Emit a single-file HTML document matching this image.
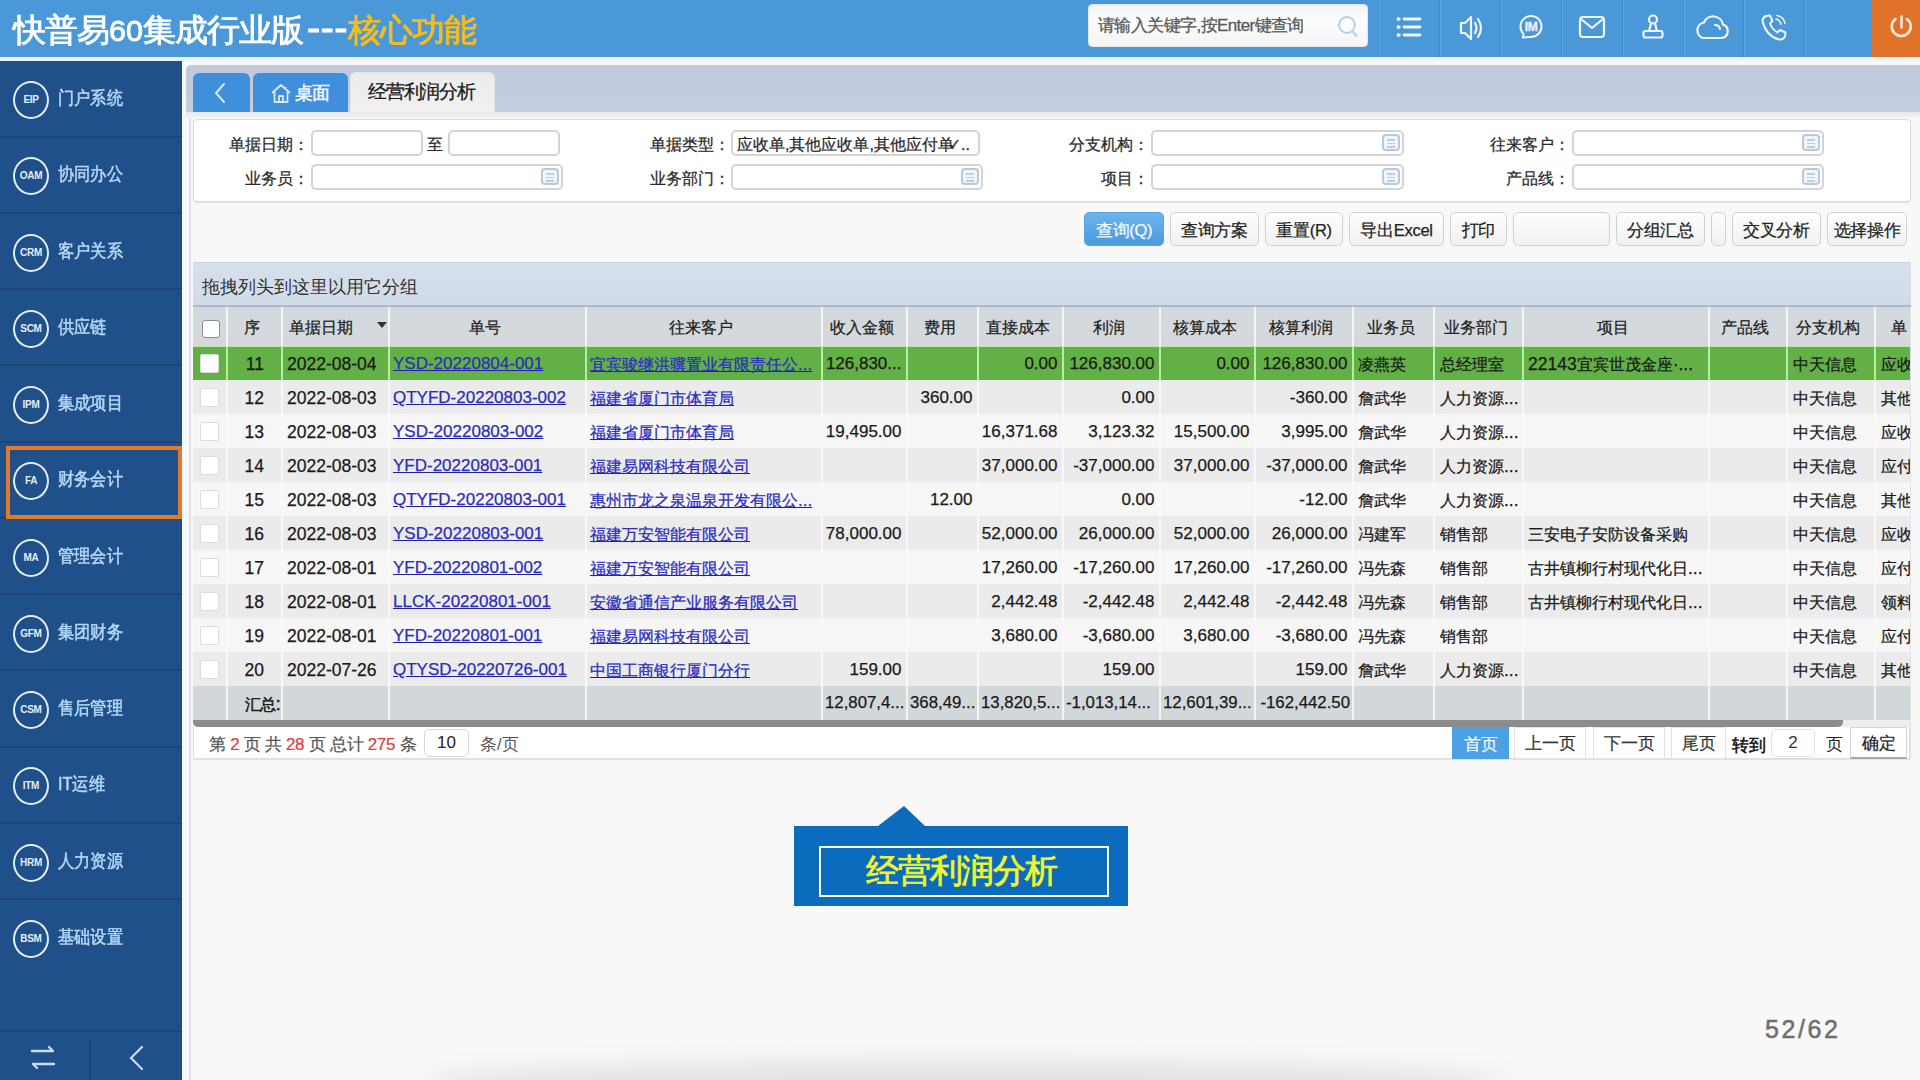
<!DOCTYPE html>
<html><head><meta charset="utf-8"><title>经营利润分析</title>
<style>
*{margin:0;padding:0;box-sizing:border-box}
html,body{width:1920px;height:1080px;overflow:hidden;background:#f8f8f8;font-family:"Liberation Sans",sans-serif;color:#222}
div,svg{position:absolute}
span{position:static}
.z{font-size:16.25px}
.nw{white-space:nowrap}
#hdr{left:0;top:0;width:1920px;height:57px;background:#4a98d8}
#hdrline{left:0;top:57px;width:1920px;height:4px;background:#eaf2fa}
#title{left:13px;top:11px;font-size:33px;line-height:40px;color:#fff;white-space:nowrap;letter-spacing:-1px;-webkit-text-stroke:0.9px currentColor;transform:scaleY(0.97);transform-origin:0 0}
#title span{position:static}
#search{left:1088px;top:4px;width:280px;height:43px;background:linear-gradient(#f2f2f2,#fdfdfd 40%,#f3f3f3);border-radius:4px;border:1px solid #dfe6ee}
#search .ph{left:9px;top:11px;font-size:17px;line-height:20px;color:#5a5a5a;white-space:nowrap;letter-spacing:-0.6px;-webkit-text-stroke:0.3px currentColor}
.ic{top:0;height:57px;width:2px;background:#5ea6e2;border-left:1px solid #4289c9}
#side{left:0;top:61px;width:183px;height:1019px;background:#1f5089}
.sep{left:0;width:183px;height:2px;background:#1b4677}
.cir{left:13px;width:36px;height:38px;border:2.5px solid #e4edf7;border-radius:50%;color:#e4edf7;font-size:10px;font-weight:bold;text-align:center;line-height:34px;letter-spacing:-0.3px}
.lab{left:58px;font-size:18px;line-height:22px;color:#b4d6f6;white-space:nowrap;transform:scaleX(0.9);transform-origin:0 0;-webkit-text-stroke:0.55px currentColor}
#sedge{left:182px;top:61px;width:5px;height:1019px;background:#f4f9fc}
#sedge2{left:189px;top:112px;width:1.5px;height:968px;background:#dfe3e8}
#main{left:186px;top:61px;width:1734px;height:1019px;background:#f8f8f8}
#tabbar{left:186px;top:65px;width:1734px;height:47px;background:linear-gradient(#c0cadb,#c4cee1);border-radius:5px 0 0 0}
.tab{top:73px;height:39px;border-radius:6px 6px 0 0;background:#3f8fdb}
#under{left:186px;top:112px;width:1734px;height:6px;background:linear-gradient(#e6e6e6,#f4f4f4)}
#filter{left:193px;top:119px;width:1718px;height:83px;background:#fff;border:1px solid #dadada;border-radius:4px;box-shadow:0 1px 1px #e2e2e2}
.fl{font-size:16.2px;line-height:20px;color:#2a2a2a;white-space:nowrap;text-align:right;margin-top:1px;-webkit-text-stroke:0.25px currentColor}
.inp{height:26px;border:2px solid #d4d4d4;border-radius:5px;background:#fff}
.lic{width:18px;height:17px;border:2px solid #b9c9dd;border-radius:4px;background:#eef7fd}
.lic i{position:absolute;left:3px;width:8px;height:1.6px;background:#bccce4}
.btn{top:212px;height:34px;border:1.5px solid #d0d0d0;border-radius:5px;background:linear-gradient(#fdfdfd,#f1f1f1);font-size:16.5px;line-height:34px;-webkit-text-stroke:0.25px currentColor;text-align:center;color:#222;white-space:nowrap;letter-spacing:-0.3px}
#grid{left:193px;top:263px;width:1718px;height:497px;background:#fff;border:1px solid #dde3ea}
#gbar{left:193px;top:262px;width:1718px;height:45px;background:linear-gradient(#d6e0ec,#d2dce9);border-top:1.5px solid #c9d1da;border-bottom:2px solid #a9b9ca;border-radius:3px 3px 0 0}
#gbar .t{left:9px;top:13px;font-size:18px;line-height:22px;color:#333;white-space:nowrap}
.row{left:193px;width:1717px;height:34px}
.cell{top:1px;height:100%;font-size:17.5px;line-height:34px;white-space:nowrap;overflow:hidden;color:#1a1a1a;-webkit-text-stroke:0.25px currentColor}
.vl{top:0;width:2px;height:100%}
.ck{width:18px;height:18px;border-radius:3px;background:#fff}
.lk{font-size:17px;color:#2c2cc0;text-decoration:underline;text-decoration-color:#2020a0}
</style></head><body>

<div id="hdr">
<div id="title">快普易<span style="font-size:30.5px;letter-spacing:0">60</span>集成行业版<span style="font-size:40px;letter-spacing:0.3px;margin-left:4px;line-height:0">---</span><span style="color:#f7bd1e">核心功能</span></div>
<div id="search"><div class="ph">请输入关键字,按Enter键查询</div><svg style="left:248px;top:10px" width="22" height="24" viewBox="0 0 22 24"><circle cx="10" cy="10" r="8" fill="none" stroke="#b4d2ea" stroke-width="2"/><line x1="15.5" y1="16" x2="19.5" y2="21" stroke="#b4d2ea" stroke-width="2.2" stroke-linecap="round"/></svg></div>
<div class="ic" style="left:1378px"></div>
<div class="ic" style="left:1439px"></div>
<div class="ic" style="left:1500px"></div>
<div class="ic" style="left:1561px"></div>
<div class="ic" style="left:1622px"></div>
<div class="ic" style="left:1683px"></div>
<div class="ic" style="left:1743px"></div>
<div class="ic" style="left:1804px"></div>
<svg style="left:1394px;top:14px" width="32" height="26" viewBox="0 0 32 26" fill="none" stroke="#eef5fc" stroke-width="2.2" stroke-linecap="round" stroke-linejoin="round"><circle cx="4.5" cy="5" r="1.5" fill="#eef5fc" stroke-width="1"/><circle cx="4.5" cy="13" r="1.5" fill="#eef5fc" stroke-width="1"/><circle cx="4.5" cy="21" r="1.5" fill="#eef5fc" stroke-width="1"/><line x1="10" y1="5" x2="26" y2="5" stroke-width="2.8"/><line x1="10" y1="13" x2="26" y2="13" stroke-width="2.8"/><line x1="10" y1="21" x2="26" y2="21" stroke-width="2.8"/></svg>
<svg style="left:1456px;top:13px" width="30" height="30" viewBox="0 0 30 30" fill="none" stroke="#eef5fc" stroke-width="2.2" stroke-linecap="round" stroke-linejoin="round"><path d="M5 10 H9 L15 4 V26 L9 20 H5 Z"/><path d="M19 10 Q22 15 19 20"/><path d="M22 6 Q28 15 22 24"/></svg>
<svg style="left:1516px;top:13px" width="30" height="30" viewBox="0 0 30 30" fill="none" stroke="#eef5fc" stroke-width="2.2" stroke-linecap="round" stroke-linejoin="round"><path d="M7.6 21 A10.5 10.5 0 1 1 13.2 23.9 L6.8 24.6 Z" stroke-width="2"/><text x="15" y="18.2" font-size="12" font-weight="bold" fill="#eef5fc" stroke="#eef5fc" stroke-width="0.3" text-anchor="middle" font-family="Liberation Sans" letter-spacing="-0.5">IM</text></svg>
<svg style="left:1576px;top:13px" width="32" height="28" viewBox="0 0 32 28" fill="none" stroke="#eef5fc" stroke-width="2.2" stroke-linecap="round" stroke-linejoin="round"><rect x="4" y="4" width="24" height="20" rx="3"/><path d="M5 6 L16 15 L27 6"/></svg>
<svg style="left:1638px;top:12px" width="30" height="30" viewBox="0 0 30 30" fill="none" stroke="#eef5fc" stroke-width="2.2" stroke-linecap="round" stroke-linejoin="round"><circle cx="15" cy="7.5" r="4"/><path d="M13 11.5 L11 19 M17 11.5 L19 19"/><rect x="5.5" y="19" width="19" height="6.5" rx="2"/></svg>
<svg style="left:1693px;top:12px" width="38" height="30" viewBox="0 0 38 30" fill="none" stroke="#eef5fc" stroke-width="2.2" stroke-linecap="round" stroke-linejoin="round"><path d="M10 26 H29 A7 7 0 0 0 30 12.5 A10 10 0 0 0 11 10.5 A8 8 0 0 0 10 26 Z"/><path d="M22 13 A5 5 0 0 1 27 17"/></svg>
<svg style="left:1758px;top:12px" width="32" height="32" viewBox="0 0 32 32" fill="none" stroke="#eef5fc" stroke-width="2.2" stroke-linecap="round" stroke-linejoin="round"><path d="M8 4 L12 3.5 L14.5 9 L12 11.5 Q14 17 19.5 20.5 L22 18 L27.5 20.5 L27 24.5 Q25 28 21 27.5 Q8 24 4.5 9 Q4.5 5.5 8 4 Z" stroke-width="2"/><path d="M18 7 Q22 8 23 12" stroke-width="1.6"/><path d="M19 3.5 Q26 5 27 11.5" stroke-width="1.6"/></svg>
<div style="left:1872px;top:0;width:48px;height:57px;background:#e1722a"></div>
<svg style="left:1886px;top:10px" width="32" height="32" viewBox="0 0 32 32" fill="none" stroke="#fbe9da" stroke-width="2.6" stroke-linecap="round"><path d="M9.5 9 A9.5 9.5 0 1 0 21 9"/><line x1="15.5" y1="6.5" x2="15.5" y2="17.5"/></svg>
</div>
<div id="hdrline"></div>
<div id="side"></div>
<div class="cir" style="top:81.00px">EIP</div>
<div class="lab" style="top:87.00px">门户系统</div>
<div class="sep" style="top:135.50px"></div>
<div class="cir" style="top:157.25px">OAM</div>
<div class="lab" style="top:163.25px">协同办公</div>
<div class="sep" style="top:211.75px"></div>
<div class="cir" style="top:233.50px">CRM</div>
<div class="lab" style="top:239.50px">客户关系</div>
<div class="sep" style="top:288.00px"></div>
<div class="cir" style="top:309.75px">SCM</div>
<div class="lab" style="top:315.75px">供应链</div>
<div class="sep" style="top:364.25px"></div>
<div class="cir" style="top:386.00px">IPM</div>
<div class="lab" style="top:392.00px">集成项目</div>
<div class="sep" style="top:440.50px"></div>
<div class="cir" style="top:462.25px">FA</div>
<div class="lab" style="top:468.25px">财务会计</div>
<div class="sep" style="top:516.75px"></div>
<div class="cir" style="top:538.50px">MA</div>
<div class="lab" style="top:544.50px">管理会计</div>
<div class="sep" style="top:593.00px"></div>
<div class="cir" style="top:614.75px">GFM</div>
<div class="lab" style="top:620.75px">集团财务</div>
<div class="sep" style="top:669.25px"></div>
<div class="cir" style="top:691.00px">CSM</div>
<div class="lab" style="top:697.00px">售后管理</div>
<div class="sep" style="top:745.50px"></div>
<div class="cir" style="top:767.25px">ITM</div>
<div class="lab" style="top:773.25px">IT运维</div>
<div class="sep" style="top:821.75px"></div>
<div class="cir" style="top:843.50px">HRM</div>
<div class="lab" style="top:849.50px">人力资源</div>
<div class="sep" style="top:898.00px"></div>
<div class="cir" style="top:919.75px">BSM</div>
<div class="lab" style="top:925.75px">基础设置</div>
<div class="sep" style="top:1030px"></div>
<div style="left:89px;top:1040px;width:2px;height:40px;background:#1b4677"></div>
<svg style="left:28px;top:1044px" width="30" height="28" viewBox="0 0 30 28" fill="none" stroke="#c6dcf2" stroke-width="2.4" stroke-linecap="round" stroke-linejoin="round"><path d="M4 7 H25 L21 3"/><path d="M26 20 H5 L9 24"/></svg>
<svg style="left:126px;top:1044px" width="20" height="28" viewBox="0 0 20 28" fill="none" stroke="#c6dcf2" stroke-width="2.2" stroke-linecap="round"><path d="M16 3 L5 14 L16 25"/></svg>
<div style="left:6px;top:446px;width:176px;height:73px;border:4.5px solid #e27a2a"></div>
<div id="sedge"></div><div id="sedge2"></div>
<div id="tabbar"></div>
<div id="under"></div>
<div class="tab" style="left:193px;width:57px"></div>
<svg style="left:211px;top:82px" width="20" height="22" viewBox="0 0 20 22" fill="none" stroke="#d6e8fa" stroke-width="2" stroke-linecap="round"><path d="M13 2 L5 11 L13 20"/></svg>
<div class="tab" style="left:253px;width:95px"></div>
<svg style="left:270px;top:82px" width="22" height="22" viewBox="0 0 22 22" fill="none" stroke="#d6e8fa" stroke-width="1.8" stroke-linejoin="round"><path d="M2 11 L11 3 L20 11 M4.5 9 V20 H17.5 V9 M9 20 V14 H13 V20 M15.5 5 V8"/></svg>
<div class="nw" style="left:295px;top:82px;font-size:18px;line-height:22px;color:#eaf3fc;font-weight:bold;letter-spacing:-1px">桌面</div>
<div style="left:350px;top:72px;width:145px;height:40px;border-radius:6px 6px 0 0;background:linear-gradient(#ececec,#f0f0f0);border:1px solid #e4e4e4;border-bottom:none"></div>
<div class="nw" style="left:368px;top:81px;font-size:18.5px;line-height:22px;color:#1a1a1a;letter-spacing:-1.2px;-webkit-text-stroke:0.3px currentColor">经营利润分析</div>
<div id="filter"></div>
<div class="fl" style="right:1611px;top:133px">单据日期：</div>
<div class="inp" style="left:311px;top:130px;width:112px"></div>
<div class="fl" style="left:427px;top:133px">至</div>
<div class="inp" style="left:448px;top:130px;width:112px"></div>
<div class="fl" style="right:1611px;top:167px">业务员：</div>
<div class="inp" style="left:311px;top:164px;width:252px"></div>
<div class="lic" style="left:541px;top:168px"><i style="top:3.2px"></i><i style="top:6.6px"></i><i style="top:10px"></i></div>
<div class="fl" style="right:1190px;top:133px">单据类型：</div>
<div class="inp" style="left:731px;top:130px;width:249px"></div>
<div class="fl" style="left:737px;top:133px;text-align:left">应收单,其他应收单,其他应付单<span style="margin-left:-6px">✓..</span></div>
<div class="fl" style="right:1190px;top:167px">业务部门：</div>
<div class="inp" style="left:731px;top:164px;width:252px"></div>
<div class="lic" style="left:961px;top:168px"><i style="top:3.2px"></i><i style="top:6.6px"></i><i style="top:10px"></i></div>
<div class="fl" style="right:771px;top:133px">分支机构：</div>
<div class="inp" style="left:1151px;top:130px;width:253px"></div>
<div class="lic" style="left:1382px;top:134px"><i style="top:3.2px"></i><i style="top:6.6px"></i><i style="top:10px"></i></div>
<div class="fl" style="right:771px;top:167px">项目：</div>
<div class="inp" style="left:1151px;top:164px;width:253px"></div>
<div class="lic" style="left:1382px;top:168px"><i style="top:3.2px"></i><i style="top:6.6px"></i><i style="top:10px"></i></div>
<div class="fl" style="right:350px;top:133px">往来客户：</div>
<div class="inp" style="left:1572px;top:130px;width:252px"></div>
<div class="lic" style="left:1802px;top:134px"><i style="top:3.2px"></i><i style="top:6.6px"></i><i style="top:10px"></i></div>
<div class="fl" style="right:350px;top:167px">产品线：</div>
<div class="inp" style="left:1572px;top:164px;width:252px"></div>
<div class="lic" style="left:1802px;top:168px"><i style="top:3.2px"></i><i style="top:6.6px"></i><i style="top:10px"></i></div>
<div class="btn" style="left:1084px;width:80px;background:linear-gradient(#6cb4ec,#4a9ae0);border-color:#5aa3e0;color:#f4f9ff">查询(Q)</div>
<div class="btn" style="left:1170px;width:89px">查询方案</div>
<div class="btn" style="left:1265px;width:78px">重置(R)</div>
<div class="btn" style="left:1349px;width:95px">导出Excel</div>
<div class="btn" style="left:1450px;width:57px">打印</div>
<div class="btn" style="left:1513px;width:97px"></div>
<div class="btn" style="left:1616px;width:89px">分组汇总</div>
<div class="btn" style="left:1711px;width:15px"></div>
<div class="btn" style="left:1732px;width:89px">交叉分析</div>
<div class="btn" style="left:1827px;width:80px">选择操作</div>
<div id="grid"></div>
<div id="gbar"><div class="t">拖拽列头到这里以用它分组</div></div>
<div class="row" style="top:307px;height:40px;background:linear-gradient(#d0d9e0,#d5d9dc 60%,#d7d5de)">
<div class="vl" style="left:33px;background:#f4f4f4"></div>
<div class="vl" style="left:88px;background:#f4f4f4"></div>
<div class="vl" style="left:195px;background:#f4f4f4"></div>
<div class="vl" style="left:392px;background:#f4f4f4"></div>
<div class="vl" style="left:628px;background:#f4f4f4"></div>
<div class="vl" style="left:713px;background:#f4f4f4"></div>
<div class="vl" style="left:784px;background:#f4f4f4"></div>
<div class="vl" style="left:869px;background:#f4f4f4"></div>
<div class="vl" style="left:966px;background:#f4f4f4"></div>
<div class="vl" style="left:1061px;background:#f4f4f4"></div>
<div class="vl" style="left:1159px;background:#f4f4f4"></div>
<div class="vl" style="left:1240px;background:#f4f4f4"></div>
<div class="vl" style="left:1329px;background:#f4f4f4"></div>
<div class="vl" style="left:1515px;background:#f4f4f4"></div>
<div class="vl" style="left:1593px;background:#f4f4f4"></div>
<div class="vl" style="left:1681px;background:#f4f4f4"></div>
<div class="ck" style="left:9px;top:13px;border:1.6px solid #8c8c8c"></div>
<div class="cell " style="left:34px;width:55px;text-align:center;color:#222;top:3px;margin-left:-3px"><span class="z">序</span></div>
<div class="cell " style="left:89px;width:107px;text-align:center;color:#222;top:3px;margin-left:-15px"><span class="z">单据日期</span></div>
<div class="cell " style="left:196px;width:197px;text-align:center;color:#222;top:3px;margin-left:-3px"><span class="z">单号</span></div>
<div class="cell " style="left:393px;width:236px;text-align:center;color:#222;top:3px;margin-left:-3px"><span class="z">往来客户</span></div>
<div class="cell " style="left:629px;width:85px;text-align:center;color:#222;top:3px;margin-left:-3px"><span class="z">收入金额</span></div>
<div class="cell " style="left:714px;width:71px;text-align:center;color:#222;top:3px;margin-left:-3px"><span class="z">费用</span></div>
<div class="cell " style="left:785px;width:85px;text-align:center;color:#222;top:3px;margin-left:-3px"><span class="z">直接成本</span></div>
<div class="cell " style="left:870px;width:97px;text-align:center;color:#222;top:3px;margin-left:-3px"><span class="z">利润</span></div>
<div class="cell " style="left:967px;width:95px;text-align:center;color:#222;top:3px;margin-left:-3px"><span class="z">核算成本</span></div>
<div class="cell " style="left:1062px;width:98px;text-align:center;color:#222;top:3px;margin-left:-3px"><span class="z">核算利润</span></div>
<div class="cell " style="left:1160px;width:81px;text-align:center;color:#222;top:3px;margin-left:-3px"><span class="z">业务员</span></div>
<div class="cell " style="left:1241px;width:89px;text-align:center;color:#222;top:3px;margin-left:-3px"><span class="z">业务部门</span></div>
<div class="cell " style="left:1330px;width:186px;text-align:center;color:#222;top:3px;margin-left:-3px"><span class="z">项目</span></div>
<div class="cell " style="left:1516px;width:78px;text-align:center;color:#222;top:3px;margin-left:-3px"><span class="z">产品线</span></div>
<div class="cell " style="left:1594px;width:88px;text-align:center;color:#222;top:3px;margin-left:-3px"><span class="z">分支机构</span></div>
<div class="cell " style="left:1682px;width:35px;text-align:center;color:#222;top:3px;margin-left:6px"><span class="z">单</span></div>
<svg style="left:184px;top:15px" width="10" height="6" viewBox="0 0 10 6"><path d="M0 0 H10 L5 6 Z" fill="#333"/></svg>
</div>
<div class="row" style="top:346px;height:34px;background:#62b046">
<div class="vl" style="left:33px;background:#b6eea0"></div>
<div class="vl" style="left:88px;background:#b6eea0"></div>
<div class="vl" style="left:195px;background:#b6eea0"></div>
<div class="vl" style="left:392px;background:#b6eea0"></div>
<div class="vl" style="left:628px;background:#b6eea0"></div>
<div class="vl" style="left:713px;background:#b6eea0"></div>
<div class="vl" style="left:784px;background:#b6eea0"></div>
<div class="vl" style="left:869px;background:#b6eea0"></div>
<div class="vl" style="left:966px;background:#b6eea0"></div>
<div class="vl" style="left:1061px;background:#b6eea0"></div>
<div class="vl" style="left:1159px;background:#b6eea0"></div>
<div class="vl" style="left:1240px;background:#b6eea0"></div>
<div class="vl" style="left:1329px;background:#b6eea0"></div>
<div class="vl" style="left:1515px;background:#b6eea0"></div>
<div class="vl" style="left:1593px;background:#b6eea0"></div>
<div class="vl" style="left:1681px;background:#b6eea0"></div>
<div class="ck" style="left:7px;top:7.5px;width:19px;height:19px;border-radius:2px;border:1.5px solid #dcdcdc"></div>
<div class="cell " style="left:34px;width:37px;text-align:right;">11</div>
<div class="cell " style="left:94px;width:102px;">2022-08-04</div>
<div class="cell lk" style="left:200px;width:193px;">YSD-20220804-001</div>
<div class="cell lk" style="left:397px;width:232px;"><span class="z">宜宾骏继洪骥置业有限责任公</span>...</div>
<div class="cell " style="left:629px;width:79.5px;text-align:right;font-size:17px">126,830...</div>
<div class="cell " style="left:714px;width:65.5px;text-align:right;font-size:17px"></div>
<div class="cell " style="left:785px;width:79.5px;text-align:right;font-size:17px">0.00</div>
<div class="cell " style="left:870px;width:91.5px;text-align:right;font-size:17px">126,830.00</div>
<div class="cell " style="left:967px;width:89.5px;text-align:right;font-size:17px">0.00</div>
<div class="cell " style="left:1062px;width:92.5px;text-align:right;font-size:17px">126,830.00</div>
<div class="cell " style="left:1165px;width:76px;"><span class="z">凌燕英</span></div>
<div class="cell " style="left:1247px;width:83px;"><span class="z">总经理室</span></div>
<div class="cell " style="left:1335px;width:181px;">22143<span class="z">宜宾世茂金座</span>·...</div>
<div class="cell " style="left:1521px;width:73px;"></div>
<div class="cell " style="left:1599.5px;width:82.5px;"><span class="z">中天信息</span></div>
<div class="cell " style="left:1687.5px;width:29.5px;"><span class="z">应收</span></div>
</div>
<div style="left:193px;top:345.5px;width:1717px;height:1.5px;background:#b8ecaa"></div>
<div style="left:193px;top:379.5px;width:1717px;height:2px;background:#c0eeb0"></div>
<div class="row" style="top:380px;height:34px;background:#ebebeb">
<div class="vl" style="left:33px;background:#f8f8f8"></div>
<div class="vl" style="left:88px;background:#f8f8f8"></div>
<div class="vl" style="left:195px;background:#f8f8f8"></div>
<div class="vl" style="left:392px;background:#f8f8f8"></div>
<div class="vl" style="left:628px;background:#f8f8f8"></div>
<div class="vl" style="left:713px;background:#f8f8f8"></div>
<div class="vl" style="left:784px;background:#f8f8f8"></div>
<div class="vl" style="left:869px;background:#f8f8f8"></div>
<div class="vl" style="left:966px;background:#f8f8f8"></div>
<div class="vl" style="left:1061px;background:#f8f8f8"></div>
<div class="vl" style="left:1159px;background:#f8f8f8"></div>
<div class="vl" style="left:1240px;background:#f8f8f8"></div>
<div class="vl" style="left:1329px;background:#f8f8f8"></div>
<div class="vl" style="left:1515px;background:#f8f8f8"></div>
<div class="vl" style="left:1593px;background:#f8f8f8"></div>
<div class="vl" style="left:1681px;background:#f8f8f8"></div>
<div class="ck" style="left:7px;top:7.5px;width:19px;height:19px;border-radius:2px;border:1.5px solid #dcdcdc"></div>
<div class="cell " style="left:34px;width:37px;text-align:right;">12</div>
<div class="cell " style="left:94px;width:102px;">2022-08-03</div>
<div class="cell lk" style="left:200px;width:193px;">QTYFD-20220803-002</div>
<div class="cell lk" style="left:397px;width:232px;"><span class="z">福建省厦门市体育局</span></div>
<div class="cell " style="left:629px;width:79.5px;text-align:right;font-size:17px"></div>
<div class="cell " style="left:714px;width:65.5px;text-align:right;font-size:17px">360.00</div>
<div class="cell " style="left:785px;width:79.5px;text-align:right;font-size:17px"></div>
<div class="cell " style="left:870px;width:91.5px;text-align:right;font-size:17px">0.00</div>
<div class="cell " style="left:967px;width:89.5px;text-align:right;font-size:17px"></div>
<div class="cell " style="left:1062px;width:92.5px;text-align:right;font-size:17px">-360.00</div>
<div class="cell " style="left:1165px;width:76px;"><span class="z">詹武华</span></div>
<div class="cell " style="left:1247px;width:83px;"><span class="z">人力资源</span>...</div>
<div class="cell " style="left:1335px;width:181px;"></div>
<div class="cell " style="left:1521px;width:73px;"></div>
<div class="cell " style="left:1599.5px;width:82.5px;"><span class="z">中天信息</span></div>
<div class="cell " style="left:1687.5px;width:29.5px;"><span class="z">其他</span></div>
</div>
<div class="row" style="top:414px;height:34px;background:#f6f6f6">
<div class="vl" style="left:33px;background:#f8f8f8"></div>
<div class="vl" style="left:88px;background:#f8f8f8"></div>
<div class="vl" style="left:195px;background:#f8f8f8"></div>
<div class="vl" style="left:392px;background:#f8f8f8"></div>
<div class="vl" style="left:628px;background:#f8f8f8"></div>
<div class="vl" style="left:713px;background:#f8f8f8"></div>
<div class="vl" style="left:784px;background:#f8f8f8"></div>
<div class="vl" style="left:869px;background:#f8f8f8"></div>
<div class="vl" style="left:966px;background:#f8f8f8"></div>
<div class="vl" style="left:1061px;background:#f8f8f8"></div>
<div class="vl" style="left:1159px;background:#f8f8f8"></div>
<div class="vl" style="left:1240px;background:#f8f8f8"></div>
<div class="vl" style="left:1329px;background:#f8f8f8"></div>
<div class="vl" style="left:1515px;background:#f8f8f8"></div>
<div class="vl" style="left:1593px;background:#f8f8f8"></div>
<div class="vl" style="left:1681px;background:#f8f8f8"></div>
<div class="ck" style="left:7px;top:7.5px;width:19px;height:19px;border-radius:2px;border:1.5px solid #dcdcdc"></div>
<div class="cell " style="left:34px;width:37px;text-align:right;">13</div>
<div class="cell " style="left:94px;width:102px;">2022-08-03</div>
<div class="cell lk" style="left:200px;width:193px;">YSD-20220803-002</div>
<div class="cell lk" style="left:397px;width:232px;"><span class="z">福建省厦门市体育局</span></div>
<div class="cell " style="left:629px;width:79.5px;text-align:right;font-size:17px">19,495.00</div>
<div class="cell " style="left:714px;width:65.5px;text-align:right;font-size:17px"></div>
<div class="cell " style="left:785px;width:79.5px;text-align:right;font-size:17px">16,371.68</div>
<div class="cell " style="left:870px;width:91.5px;text-align:right;font-size:17px">3,123.32</div>
<div class="cell " style="left:967px;width:89.5px;text-align:right;font-size:17px">15,500.00</div>
<div class="cell " style="left:1062px;width:92.5px;text-align:right;font-size:17px">3,995.00</div>
<div class="cell " style="left:1165px;width:76px;"><span class="z">詹武华</span></div>
<div class="cell " style="left:1247px;width:83px;"><span class="z">人力资源</span>...</div>
<div class="cell " style="left:1335px;width:181px;"></div>
<div class="cell " style="left:1521px;width:73px;"></div>
<div class="cell " style="left:1599.5px;width:82.5px;"><span class="z">中天信息</span></div>
<div class="cell " style="left:1687.5px;width:29.5px;"><span class="z">应收</span></div>
</div>
<div class="row" style="top:448px;height:34px;background:#ebebeb">
<div class="vl" style="left:33px;background:#f8f8f8"></div>
<div class="vl" style="left:88px;background:#f8f8f8"></div>
<div class="vl" style="left:195px;background:#f8f8f8"></div>
<div class="vl" style="left:392px;background:#f8f8f8"></div>
<div class="vl" style="left:628px;background:#f8f8f8"></div>
<div class="vl" style="left:713px;background:#f8f8f8"></div>
<div class="vl" style="left:784px;background:#f8f8f8"></div>
<div class="vl" style="left:869px;background:#f8f8f8"></div>
<div class="vl" style="left:966px;background:#f8f8f8"></div>
<div class="vl" style="left:1061px;background:#f8f8f8"></div>
<div class="vl" style="left:1159px;background:#f8f8f8"></div>
<div class="vl" style="left:1240px;background:#f8f8f8"></div>
<div class="vl" style="left:1329px;background:#f8f8f8"></div>
<div class="vl" style="left:1515px;background:#f8f8f8"></div>
<div class="vl" style="left:1593px;background:#f8f8f8"></div>
<div class="vl" style="left:1681px;background:#f8f8f8"></div>
<div class="ck" style="left:7px;top:7.5px;width:19px;height:19px;border-radius:2px;border:1.5px solid #dcdcdc"></div>
<div class="cell " style="left:34px;width:37px;text-align:right;">14</div>
<div class="cell " style="left:94px;width:102px;">2022-08-03</div>
<div class="cell lk" style="left:200px;width:193px;">YFD-20220803-001</div>
<div class="cell lk" style="left:397px;width:232px;"><span class="z">福建易网科技有限公司</span></div>
<div class="cell " style="left:629px;width:79.5px;text-align:right;font-size:17px"></div>
<div class="cell " style="left:714px;width:65.5px;text-align:right;font-size:17px"></div>
<div class="cell " style="left:785px;width:79.5px;text-align:right;font-size:17px">37,000.00</div>
<div class="cell " style="left:870px;width:91.5px;text-align:right;font-size:17px">-37,000.00</div>
<div class="cell " style="left:967px;width:89.5px;text-align:right;font-size:17px">37,000.00</div>
<div class="cell " style="left:1062px;width:92.5px;text-align:right;font-size:17px">-37,000.00</div>
<div class="cell " style="left:1165px;width:76px;"><span class="z">詹武华</span></div>
<div class="cell " style="left:1247px;width:83px;"><span class="z">人力资源</span>...</div>
<div class="cell " style="left:1335px;width:181px;"></div>
<div class="cell " style="left:1521px;width:73px;"></div>
<div class="cell " style="left:1599.5px;width:82.5px;"><span class="z">中天信息</span></div>
<div class="cell " style="left:1687.5px;width:29.5px;"><span class="z">应付</span></div>
</div>
<div class="row" style="top:482px;height:34px;background:#f6f6f6">
<div class="vl" style="left:33px;background:#f8f8f8"></div>
<div class="vl" style="left:88px;background:#f8f8f8"></div>
<div class="vl" style="left:195px;background:#f8f8f8"></div>
<div class="vl" style="left:392px;background:#f8f8f8"></div>
<div class="vl" style="left:628px;background:#f8f8f8"></div>
<div class="vl" style="left:713px;background:#f8f8f8"></div>
<div class="vl" style="left:784px;background:#f8f8f8"></div>
<div class="vl" style="left:869px;background:#f8f8f8"></div>
<div class="vl" style="left:966px;background:#f8f8f8"></div>
<div class="vl" style="left:1061px;background:#f8f8f8"></div>
<div class="vl" style="left:1159px;background:#f8f8f8"></div>
<div class="vl" style="left:1240px;background:#f8f8f8"></div>
<div class="vl" style="left:1329px;background:#f8f8f8"></div>
<div class="vl" style="left:1515px;background:#f8f8f8"></div>
<div class="vl" style="left:1593px;background:#f8f8f8"></div>
<div class="vl" style="left:1681px;background:#f8f8f8"></div>
<div class="ck" style="left:7px;top:7.5px;width:19px;height:19px;border-radius:2px;border:1.5px solid #dcdcdc"></div>
<div class="cell " style="left:34px;width:37px;text-align:right;">15</div>
<div class="cell " style="left:94px;width:102px;">2022-08-03</div>
<div class="cell lk" style="left:200px;width:193px;">QTYFD-20220803-001</div>
<div class="cell lk" style="left:397px;width:232px;"><span class="z">惠州市龙之泉温泉开发有限公</span>...</div>
<div class="cell " style="left:629px;width:79.5px;text-align:right;font-size:17px"></div>
<div class="cell " style="left:714px;width:65.5px;text-align:right;font-size:17px">12.00</div>
<div class="cell " style="left:785px;width:79.5px;text-align:right;font-size:17px"></div>
<div class="cell " style="left:870px;width:91.5px;text-align:right;font-size:17px">0.00</div>
<div class="cell " style="left:967px;width:89.5px;text-align:right;font-size:17px"></div>
<div class="cell " style="left:1062px;width:92.5px;text-align:right;font-size:17px">-12.00</div>
<div class="cell " style="left:1165px;width:76px;"><span class="z">詹武华</span></div>
<div class="cell " style="left:1247px;width:83px;"><span class="z">人力资源</span>...</div>
<div class="cell " style="left:1335px;width:181px;"></div>
<div class="cell " style="left:1521px;width:73px;"></div>
<div class="cell " style="left:1599.5px;width:82.5px;"><span class="z">中天信息</span></div>
<div class="cell " style="left:1687.5px;width:29.5px;"><span class="z">其他</span></div>
</div>
<div class="row" style="top:516px;height:34px;background:#ebebeb">
<div class="vl" style="left:33px;background:#f8f8f8"></div>
<div class="vl" style="left:88px;background:#f8f8f8"></div>
<div class="vl" style="left:195px;background:#f8f8f8"></div>
<div class="vl" style="left:392px;background:#f8f8f8"></div>
<div class="vl" style="left:628px;background:#f8f8f8"></div>
<div class="vl" style="left:713px;background:#f8f8f8"></div>
<div class="vl" style="left:784px;background:#f8f8f8"></div>
<div class="vl" style="left:869px;background:#f8f8f8"></div>
<div class="vl" style="left:966px;background:#f8f8f8"></div>
<div class="vl" style="left:1061px;background:#f8f8f8"></div>
<div class="vl" style="left:1159px;background:#f8f8f8"></div>
<div class="vl" style="left:1240px;background:#f8f8f8"></div>
<div class="vl" style="left:1329px;background:#f8f8f8"></div>
<div class="vl" style="left:1515px;background:#f8f8f8"></div>
<div class="vl" style="left:1593px;background:#f8f8f8"></div>
<div class="vl" style="left:1681px;background:#f8f8f8"></div>
<div class="ck" style="left:7px;top:7.5px;width:19px;height:19px;border-radius:2px;border:1.5px solid #dcdcdc"></div>
<div class="cell " style="left:34px;width:37px;text-align:right;">16</div>
<div class="cell " style="left:94px;width:102px;">2022-08-03</div>
<div class="cell lk" style="left:200px;width:193px;">YSD-20220803-001</div>
<div class="cell lk" style="left:397px;width:232px;"><span class="z">福建万安智能有限公司</span></div>
<div class="cell " style="left:629px;width:79.5px;text-align:right;font-size:17px">78,000.00</div>
<div class="cell " style="left:714px;width:65.5px;text-align:right;font-size:17px"></div>
<div class="cell " style="left:785px;width:79.5px;text-align:right;font-size:17px">52,000.00</div>
<div class="cell " style="left:870px;width:91.5px;text-align:right;font-size:17px">26,000.00</div>
<div class="cell " style="left:967px;width:89.5px;text-align:right;font-size:17px">52,000.00</div>
<div class="cell " style="left:1062px;width:92.5px;text-align:right;font-size:17px">26,000.00</div>
<div class="cell " style="left:1165px;width:76px;"><span class="z">冯建军</span></div>
<div class="cell " style="left:1247px;width:83px;"><span class="z">销售部</span></div>
<div class="cell " style="left:1335px;width:181px;"><span class="z">三安电子安防设备采购</span></div>
<div class="cell " style="left:1521px;width:73px;"></div>
<div class="cell " style="left:1599.5px;width:82.5px;"><span class="z">中天信息</span></div>
<div class="cell " style="left:1687.5px;width:29.5px;"><span class="z">应收</span></div>
</div>
<div class="row" style="top:550px;height:34px;background:#f6f6f6">
<div class="vl" style="left:33px;background:#f8f8f8"></div>
<div class="vl" style="left:88px;background:#f8f8f8"></div>
<div class="vl" style="left:195px;background:#f8f8f8"></div>
<div class="vl" style="left:392px;background:#f8f8f8"></div>
<div class="vl" style="left:628px;background:#f8f8f8"></div>
<div class="vl" style="left:713px;background:#f8f8f8"></div>
<div class="vl" style="left:784px;background:#f8f8f8"></div>
<div class="vl" style="left:869px;background:#f8f8f8"></div>
<div class="vl" style="left:966px;background:#f8f8f8"></div>
<div class="vl" style="left:1061px;background:#f8f8f8"></div>
<div class="vl" style="left:1159px;background:#f8f8f8"></div>
<div class="vl" style="left:1240px;background:#f8f8f8"></div>
<div class="vl" style="left:1329px;background:#f8f8f8"></div>
<div class="vl" style="left:1515px;background:#f8f8f8"></div>
<div class="vl" style="left:1593px;background:#f8f8f8"></div>
<div class="vl" style="left:1681px;background:#f8f8f8"></div>
<div class="ck" style="left:7px;top:7.5px;width:19px;height:19px;border-radius:2px;border:1.5px solid #dcdcdc"></div>
<div class="cell " style="left:34px;width:37px;text-align:right;">17</div>
<div class="cell " style="left:94px;width:102px;">2022-08-01</div>
<div class="cell lk" style="left:200px;width:193px;">YFD-20220801-002</div>
<div class="cell lk" style="left:397px;width:232px;"><span class="z">福建万安智能有限公司</span></div>
<div class="cell " style="left:629px;width:79.5px;text-align:right;font-size:17px"></div>
<div class="cell " style="left:714px;width:65.5px;text-align:right;font-size:17px"></div>
<div class="cell " style="left:785px;width:79.5px;text-align:right;font-size:17px">17,260.00</div>
<div class="cell " style="left:870px;width:91.5px;text-align:right;font-size:17px">-17,260.00</div>
<div class="cell " style="left:967px;width:89.5px;text-align:right;font-size:17px">17,260.00</div>
<div class="cell " style="left:1062px;width:92.5px;text-align:right;font-size:17px">-17,260.00</div>
<div class="cell " style="left:1165px;width:76px;"><span class="z">冯先森</span></div>
<div class="cell " style="left:1247px;width:83px;"><span class="z">销售部</span></div>
<div class="cell " style="left:1335px;width:181px;"><span class="z">古井镇柳行村现代化日</span>...</div>
<div class="cell " style="left:1521px;width:73px;"></div>
<div class="cell " style="left:1599.5px;width:82.5px;"><span class="z">中天信息</span></div>
<div class="cell " style="left:1687.5px;width:29.5px;"><span class="z">应付</span></div>
</div>
<div class="row" style="top:584px;height:34px;background:#ebebeb">
<div class="vl" style="left:33px;background:#f8f8f8"></div>
<div class="vl" style="left:88px;background:#f8f8f8"></div>
<div class="vl" style="left:195px;background:#f8f8f8"></div>
<div class="vl" style="left:392px;background:#f8f8f8"></div>
<div class="vl" style="left:628px;background:#f8f8f8"></div>
<div class="vl" style="left:713px;background:#f8f8f8"></div>
<div class="vl" style="left:784px;background:#f8f8f8"></div>
<div class="vl" style="left:869px;background:#f8f8f8"></div>
<div class="vl" style="left:966px;background:#f8f8f8"></div>
<div class="vl" style="left:1061px;background:#f8f8f8"></div>
<div class="vl" style="left:1159px;background:#f8f8f8"></div>
<div class="vl" style="left:1240px;background:#f8f8f8"></div>
<div class="vl" style="left:1329px;background:#f8f8f8"></div>
<div class="vl" style="left:1515px;background:#f8f8f8"></div>
<div class="vl" style="left:1593px;background:#f8f8f8"></div>
<div class="vl" style="left:1681px;background:#f8f8f8"></div>
<div class="ck" style="left:7px;top:7.5px;width:19px;height:19px;border-radius:2px;border:1.5px solid #dcdcdc"></div>
<div class="cell " style="left:34px;width:37px;text-align:right;">18</div>
<div class="cell " style="left:94px;width:102px;">2022-08-01</div>
<div class="cell lk" style="left:200px;width:193px;">LLCK-20220801-001</div>
<div class="cell lk" style="left:397px;width:232px;"><span class="z">安徽省通信产业服务有限公司</span></div>
<div class="cell " style="left:629px;width:79.5px;text-align:right;font-size:17px"></div>
<div class="cell " style="left:714px;width:65.5px;text-align:right;font-size:17px"></div>
<div class="cell " style="left:785px;width:79.5px;text-align:right;font-size:17px">2,442.48</div>
<div class="cell " style="left:870px;width:91.5px;text-align:right;font-size:17px">-2,442.48</div>
<div class="cell " style="left:967px;width:89.5px;text-align:right;font-size:17px">2,442.48</div>
<div class="cell " style="left:1062px;width:92.5px;text-align:right;font-size:17px">-2,442.48</div>
<div class="cell " style="left:1165px;width:76px;"><span class="z">冯先森</span></div>
<div class="cell " style="left:1247px;width:83px;"><span class="z">销售部</span></div>
<div class="cell " style="left:1335px;width:181px;"><span class="z">古井镇柳行村现代化日</span>...</div>
<div class="cell " style="left:1521px;width:73px;"></div>
<div class="cell " style="left:1599.5px;width:82.5px;"><span class="z">中天信息</span></div>
<div class="cell " style="left:1687.5px;width:29.5px;"><span class="z">领料</span></div>
</div>
<div class="row" style="top:618px;height:34px;background:#f6f6f6">
<div class="vl" style="left:33px;background:#f8f8f8"></div>
<div class="vl" style="left:88px;background:#f8f8f8"></div>
<div class="vl" style="left:195px;background:#f8f8f8"></div>
<div class="vl" style="left:392px;background:#f8f8f8"></div>
<div class="vl" style="left:628px;background:#f8f8f8"></div>
<div class="vl" style="left:713px;background:#f8f8f8"></div>
<div class="vl" style="left:784px;background:#f8f8f8"></div>
<div class="vl" style="left:869px;background:#f8f8f8"></div>
<div class="vl" style="left:966px;background:#f8f8f8"></div>
<div class="vl" style="left:1061px;background:#f8f8f8"></div>
<div class="vl" style="left:1159px;background:#f8f8f8"></div>
<div class="vl" style="left:1240px;background:#f8f8f8"></div>
<div class="vl" style="left:1329px;background:#f8f8f8"></div>
<div class="vl" style="left:1515px;background:#f8f8f8"></div>
<div class="vl" style="left:1593px;background:#f8f8f8"></div>
<div class="vl" style="left:1681px;background:#f8f8f8"></div>
<div class="ck" style="left:7px;top:7.5px;width:19px;height:19px;border-radius:2px;border:1.5px solid #dcdcdc"></div>
<div class="cell " style="left:34px;width:37px;text-align:right;">19</div>
<div class="cell " style="left:94px;width:102px;">2022-08-01</div>
<div class="cell lk" style="left:200px;width:193px;">YFD-20220801-001</div>
<div class="cell lk" style="left:397px;width:232px;"><span class="z">福建易网科技有限公司</span></div>
<div class="cell " style="left:629px;width:79.5px;text-align:right;font-size:17px"></div>
<div class="cell " style="left:714px;width:65.5px;text-align:right;font-size:17px"></div>
<div class="cell " style="left:785px;width:79.5px;text-align:right;font-size:17px">3,680.00</div>
<div class="cell " style="left:870px;width:91.5px;text-align:right;font-size:17px">-3,680.00</div>
<div class="cell " style="left:967px;width:89.5px;text-align:right;font-size:17px">3,680.00</div>
<div class="cell " style="left:1062px;width:92.5px;text-align:right;font-size:17px">-3,680.00</div>
<div class="cell " style="left:1165px;width:76px;"><span class="z">冯先森</span></div>
<div class="cell " style="left:1247px;width:83px;"><span class="z">销售部</span></div>
<div class="cell " style="left:1335px;width:181px;"></div>
<div class="cell " style="left:1521px;width:73px;"></div>
<div class="cell " style="left:1599.5px;width:82.5px;"><span class="z">中天信息</span></div>
<div class="cell " style="left:1687.5px;width:29.5px;"><span class="z">应付</span></div>
</div>
<div class="row" style="top:652px;height:34px;background:#ebebeb">
<div class="vl" style="left:33px;background:#f8f8f8"></div>
<div class="vl" style="left:88px;background:#f8f8f8"></div>
<div class="vl" style="left:195px;background:#f8f8f8"></div>
<div class="vl" style="left:392px;background:#f8f8f8"></div>
<div class="vl" style="left:628px;background:#f8f8f8"></div>
<div class="vl" style="left:713px;background:#f8f8f8"></div>
<div class="vl" style="left:784px;background:#f8f8f8"></div>
<div class="vl" style="left:869px;background:#f8f8f8"></div>
<div class="vl" style="left:966px;background:#f8f8f8"></div>
<div class="vl" style="left:1061px;background:#f8f8f8"></div>
<div class="vl" style="left:1159px;background:#f8f8f8"></div>
<div class="vl" style="left:1240px;background:#f8f8f8"></div>
<div class="vl" style="left:1329px;background:#f8f8f8"></div>
<div class="vl" style="left:1515px;background:#f8f8f8"></div>
<div class="vl" style="left:1593px;background:#f8f8f8"></div>
<div class="vl" style="left:1681px;background:#f8f8f8"></div>
<div class="ck" style="left:7px;top:7.5px;width:19px;height:19px;border-radius:2px;border:1.5px solid #dcdcdc"></div>
<div class="cell " style="left:34px;width:37px;text-align:right;">20</div>
<div class="cell " style="left:94px;width:102px;">2022-07-26</div>
<div class="cell lk" style="left:200px;width:193px;">QTYSD-20220726-001</div>
<div class="cell lk" style="left:397px;width:232px;"><span class="z">中国工商银行厦门分行</span></div>
<div class="cell " style="left:629px;width:79.5px;text-align:right;font-size:17px">159.00</div>
<div class="cell " style="left:714px;width:65.5px;text-align:right;font-size:17px"></div>
<div class="cell " style="left:785px;width:79.5px;text-align:right;font-size:17px"></div>
<div class="cell " style="left:870px;width:91.5px;text-align:right;font-size:17px">159.00</div>
<div class="cell " style="left:967px;width:89.5px;text-align:right;font-size:17px"></div>
<div class="cell " style="left:1062px;width:92.5px;text-align:right;font-size:17px">159.00</div>
<div class="cell " style="left:1165px;width:76px;"><span class="z">詹武华</span></div>
<div class="cell " style="left:1247px;width:83px;"><span class="z">人力资源</span>...</div>
<div class="cell " style="left:1335px;width:181px;"></div>
<div class="cell " style="left:1521px;width:73px;"></div>
<div class="cell " style="left:1599.5px;width:82.5px;"><span class="z">中天信息</span></div>
<div class="cell " style="left:1687.5px;width:29.5px;"><span class="z">其他</span></div>
</div>
<div class="row" style="top:686px;height:34px;background:#d2d7da">
<div class="vl" style="left:33px;background:#f2f4f5"></div>
<div class="vl" style="left:88px;background:#f2f4f5"></div>
<div class="vl" style="left:195px;background:#f2f4f5"></div>
<div class="vl" style="left:392px;background:#f2f4f5"></div>
<div class="vl" style="left:628px;background:#f2f4f5"></div>
<div class="vl" style="left:713px;background:#f2f4f5"></div>
<div class="vl" style="left:784px;background:#f2f4f5"></div>
<div class="vl" style="left:869px;background:#f2f4f5"></div>
<div class="vl" style="left:966px;background:#f2f4f5"></div>
<div class="vl" style="left:1061px;background:#f2f4f5"></div>
<div class="vl" style="left:1159px;background:#f2f4f5"></div>
<div class="vl" style="left:1240px;background:#f2f4f5"></div>
<div class="vl" style="left:1329px;background:#f2f4f5"></div>
<div class="vl" style="left:1515px;background:#f2f4f5"></div>
<div class="vl" style="left:1593px;background:#f2f4f5"></div>
<div class="vl" style="left:1681px;background:#f2f4f5"></div>
<div class="cell " style="left:34px;width:53px;text-align:right;letter-spacing:-0.5px;-webkit-text-stroke:0.5px currentColor"><span class="z">汇总</span>:</div>
<div class="cell " style="left:632px;width:82px;font-size:16.8px;top:0">12,807,4...</div>
<div class="cell " style="left:717px;width:68px;font-size:16.8px;top:0">368,49...</div>
<div class="cell " style="left:788px;width:82px;font-size:16.8px;top:0">13,820,5...</div>
<div class="cell " style="left:873px;width:94px;font-size:16.8px;top:0">-1,013,14...</div>
<div class="cell " style="left:970px;width:92px;font-size:16.8px;top:0">12,601,39...</div>
<div class="cell " style="left:1062px;width:95px;text-align:right;font-size:16.8px;top:0">-162,442.50</div>
</div>
<div style="left:193px;top:720px;width:1717px;height:7px;background:#eeeeee"></div>
<div style="left:193px;top:720px;width:1650px;height:7px;background:#8c8c8c;border-radius:0 0 5px 5px"></div>
<div style="left:193px;top:727px;width:1717px;height:32px;background:#fff;border:1px solid #e0e0e0;border-top:none"></div>
<div class="nw" style="left:209px;top:734.5px;font-size:17px;line-height:20px;color:#555;letter-spacing:-0.3px;-webkit-text-stroke:0.2px currentColor">第 <span style="color:#e23b3b">2</span> 页 共 <span style="color:#e23b3b">28</span> 页 总计 <span style="color:#e23b3b">275</span> 条</div>
<div style="left:424px;top:729px;width:45px;height:28px;border:1.5px solid #d8d8d8;border-radius:5px;background:#fff;font-size:17px;line-height:25px;text-align:center;color:#222">10</div>
<div class="nw" style="left:480px;top:734.5px;font-size:17px;line-height:20px;color:#555">条/页</div>
<div style="left:1452px;top:727px;width:57px;height:32px;background:#4ea0e4;color:#f2f8ff;font-size:16.5px;line-height:34px;text-align:center;-webkit-text-stroke:0.2px currentColor">首页</div>
<div style="left:1514px;top:727px;width:72px;height:32px;background:#fff;border:1.5px solid #e2e2e2;color:#333;font-size:16.5px;line-height:31px;text-align:center;-webkit-text-stroke:0.2px currentColor">上一页</div>
<div style="left:1593px;top:727px;width:72px;height:32px;background:#fff;border:1.5px solid #e2e2e2;color:#333;font-size:16.5px;line-height:31px;text-align:center;-webkit-text-stroke:0.2px currentColor">下一页</div>
<div style="left:1671px;top:727px;width:55px;height:32px;background:#fff;border:1.5px solid #e2e2e2;color:#333;font-size:16.5px;line-height:31px;text-align:center;-webkit-text-stroke:0.2px currentColor">尾页</div>
<div class="nw" style="left:1732px;top:734.5px;font-size:16.5px;line-height:20px;color:#111;-webkit-text-stroke:0.5px currentColor">转到</div>
<div style="left:1771px;top:729px;width:44px;height:28px;border:1.5px solid #e2e2e2;border-radius:5px;background:#fff;font-size:17px;line-height:25px;text-align:center;color:#333">2</div>
<div class="nw" style="left:1826px;top:734.5px;font-size:17px;line-height:20px;color:#222">页</div>
<div style="left:1850px;top:727px;width:57px;height:32px;background:#fff;border:1.5px solid #d6d6d6;border-bottom:2px solid #aaa;color:#222;font-size:16.5px;line-height:31px;text-align:center;-webkit-text-stroke:0.2px currentColor">确定</div>
<svg style="left:794px;top:805px" width="335" height="102" viewBox="0 0 335 102"><path d="M0 21 H84 L110 1 L131 21 H334 V101 H0 Z" fill="#0b6cbd"/></svg>
<div style="left:819px;top:846px;width:290px;height:51px;border:2px solid #fff"></div>
<div class="nw" style="left:866px;top:851px;font-size:33px;line-height:40px;color:#f4f52a;letter-spacing:-1.2px;-webkit-text-stroke:0.8px currentColor">经营利润分析</div>
<div class="nw" style="left:1765px;top:1015px;font-size:25px;line-height:28px;color:#6e6e6e;letter-spacing:2.6px;-webkit-text-stroke:0.5px currentColor">52/62</div>
<div style="left:420px;top:1062px;width:1090px;height:44px;border-radius:50%;background:rgba(0,0,0,0.09);filter:blur(12px)"></div>
</body></html>
